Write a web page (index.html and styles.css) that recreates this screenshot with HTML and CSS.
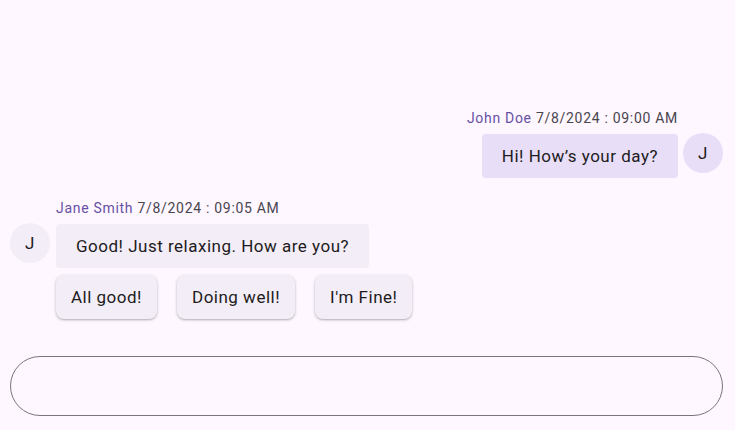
FILE: index.html
```html
<!DOCTYPE html>
<html lang="en">
<head>
<meta charset="utf-8">
<title>Chat</title>
<link rel="stylesheet" href="styles.css">
</head>
<body>
<div class="app">
  <div class="messages">
    <div class="msg msg-out">
      <div class="msg-body">
        <div class="meta"><span class="name">John Doe</span> <span class="time">7/8/2024 : 09:00 AM</span></div>
        <div class="bubble bubble-out">Hi! How’s your day?</div>
      </div>
      <div class="avatar avatar-out">J</div>
    </div>
    <div class="msg msg-in">
      <div class="avatar avatar-in">J</div>
      <div class="msg-body">
        <div class="meta"><span class="name">Jane Smith</span> <span class="time">7/8/2024 : 09:05 AM</span></div>
        <div class="bubble bubble-in">Good! Just relaxing. How are you?</div>
        <div class="chips">
          <button class="chip">All good!</button>
          <button class="chip">Doing well!</button>
          <button class="chip">I'm Fine!</button>
        </div>
      </div>
    </div>
  </div>
  <div class="composer">
    <div class="input"></div>
  </div>
</div>
</body>
</html>
```

FILE: styles.css
```css
* { box-sizing: border-box; }
html, body {
  margin: 0;
  height: 100%;
  background: #FEF7FF;
  font-family: Roboto, "Noto Sans", sans-serif;
  color: #1D1B20;
}
.app {
  height: 430px;
  display: flex;
  flex-direction: column;
}
.messages {
  flex: 1;
  display: flex;
  flex-direction: column;
  justify-content: flex-end;
  padding: 0 12px 0 10px;
  gap: 20px;
}
.msg {
  display: flex;
  align-items: flex-end;
}
.msg-out {
  justify-content: flex-end;
  gap: 5px;
}
.msg-in {
  gap: 6px;
}
.msg-in .avatar { align-self: flex-start; margin-top: 25px; }
.msg-out .avatar { margin-bottom: 5px; }
.msg-body {
  display: flex;
  flex-direction: column;
}
.msg-out .msg-body { align-items: flex-end; }
.msg-in .msg-body { align-items: flex-start; }
.meta {
  font-size: 14px;
  line-height: 20px;
  letter-spacing: 0.7px;
  margin-bottom: 6px;
}
.name { color: #6750A4; }
.time { color: #49454F; }
.bubble {
  font-size: 17px;
  line-height: 24px;
  letter-spacing: 0.5px;
  padding: 10px 20px;
  border-radius: 4px;
}
.bubble-out { background: #E8DEF8; }
.bubble-in { background: #F3EDF7; }
.avatar {
  width: 40px;
  height: 40px;
  border-radius: 50%;
  display: flex;
  align-items: center;
  justify-content: center;
  font-size: 17px;
  letter-spacing: 0.5px;
  color: #1D1B20;
  flex: none;
}
.avatar-out { background: #E8DEF8; }
.avatar-in { background: #F3EDF7; }
.chips {
  display: flex;
  gap: 20px;
  margin-top: 7px;
}
.chip {
  font-family: Roboto, "Noto Sans", sans-serif;
  font-size: 17px;
  line-height: 24px;
  letter-spacing: 0.5px;
  color: #1D1B20;
  background: #F3EDF7;
  border: none;
  border-radius: 8px;
  padding: 10px 15px;
  box-shadow: 0 1px 3px rgba(0,0,0,0.25), 0 1px 1px rgba(0,0,0,0.08);
}
.composer {
  padding: 37px 12px 14px 10px;
}
.input {
  height: 60px;
  border: 1px solid #79747E;
  border-radius: 30px;
}
```
